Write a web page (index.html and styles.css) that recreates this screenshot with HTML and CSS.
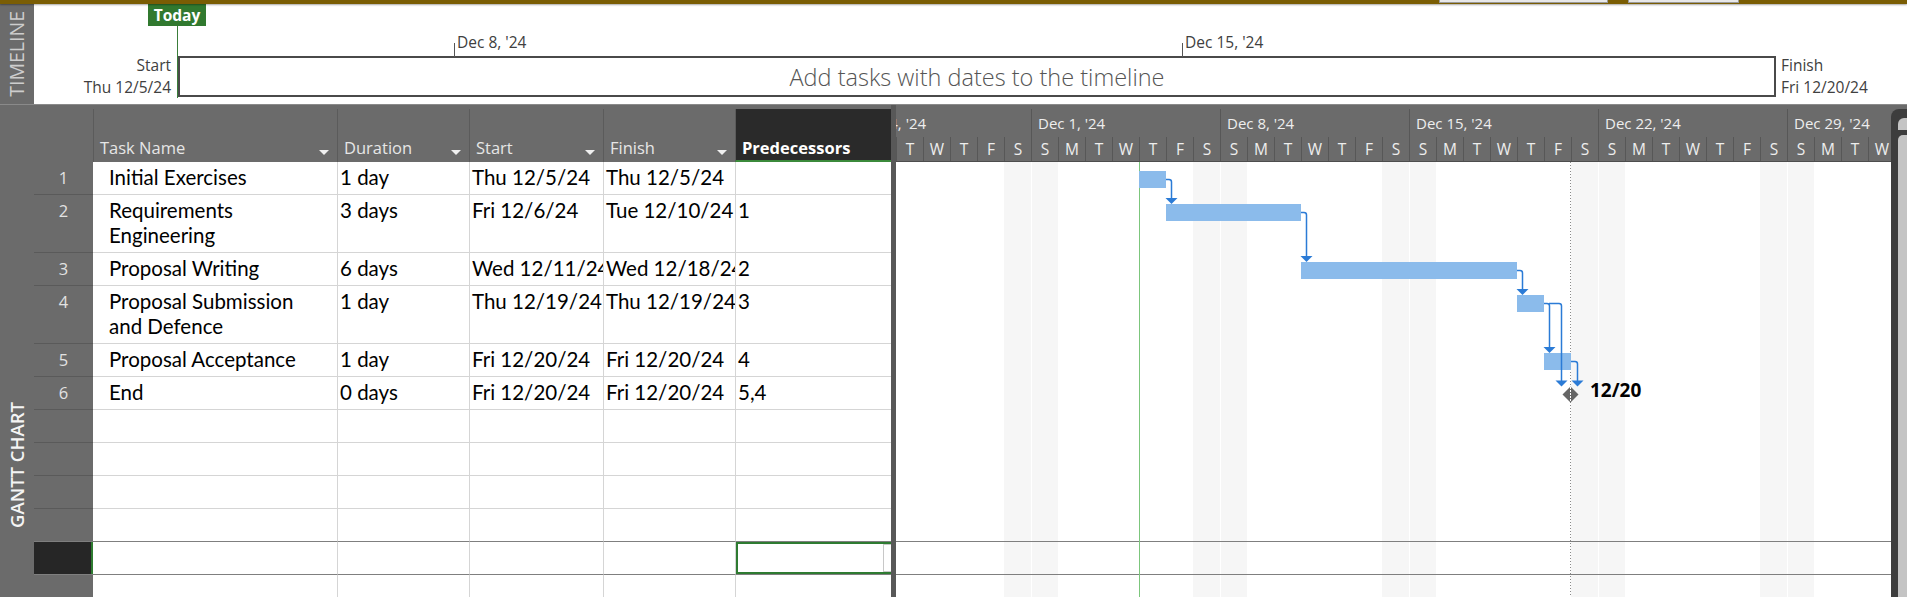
FILE: index.html
```html
<!DOCTYPE html>
<html>
<head>
<meta charset="utf-8">
<title>Gantt Chart</title>
<link rel="stylesheet" href="styles.css">
</head>
<body>
<div class="app">
  <div class="titlebar"><span class="tb-btn b1"></span><span class="tb-btn b2"></span></div>

  <section class="timeline">
    <div class="side"><span class="side-text">TIMELINE</span></div>
    <div class="tl-body">
      <div class="today-flag">Today</div>
      <div class="tick t1"><span>Dec 8, '24</span></div>
      <div class="tick t2"><span>Dec 15, '24</span></div>
      <div class="tl-row">
        <div class="tl-start">Start<br>Thu 12/5/24</div>
        <div class="tl-box">Add tasks with dates to the timeline</div>
        <div class="tl-finish">Finish<br>Fri 12/20/24</div>
      </div>
    </div>
  </section>

  <section class="gantt">
    <div class="side gside"><span class="side-text">GANTT CHART</span></div>

    <div class="grid">
      <div class="row hdr">
        <div class="hc first"></div>
        <div class="hc"><span>Task Name</span><i class="dd"></i></div>
        <div class="hc"><span>Duration</span><i class="dd"></i></div>
        <div class="hc"><span>Start</span><i class="dd"></i></div>
        <div class="hc"><span>Finish</span><i class="dd"></i></div>
        <div class="hc pred"><span>Predecessors</span></div>
      </div>
      <div class="row tr">
        <div class="c num">1</div><div class="c name">Initial Exercises</div><div class="c">1 day</div><div class="c">Thu 12/5/24</div><div class="c">Thu 12/5/24</div><div class="c"></div>
      </div>
      <div class="row tr h2">
        <div class="c num">2</div><div class="c name">Requirements Engineering</div><div class="c">3 days</div><div class="c">Fri 12/6/24</div><div class="c">Tue 12/10/24</div><div class="c">1</div>
      </div>
      <div class="row tr">
        <div class="c num">3</div><div class="c name">Proposal Writing</div><div class="c">6 days</div><div class="c">Wed 12/11/24</div><div class="c">Wed 12/18/24</div><div class="c">2</div>
      </div>
      <div class="row tr h2">
        <div class="c num">4</div><div class="c name">Proposal Submission and Defence</div><div class="c">1 day</div><div class="c">Thu 12/19/24</div><div class="c">Thu 12/19/24</div><div class="c">3</div>
      </div>
      <div class="row tr">
        <div class="c num">5</div><div class="c name">Proposal Acceptance</div><div class="c">1 day</div><div class="c">Fri 12/20/24</div><div class="c">Fri 12/20/24</div><div class="c">4</div>
      </div>
      <div class="row tr">
        <div class="c num">6</div><div class="c name">End</div><div class="c">0 days</div><div class="c">Fri 12/20/24</div><div class="c">Fri 12/20/24</div><div class="c">5,4</div>
      </div>
      <div class="row tr"><div class="c num"></div><div class="c name"></div><div class="c"></div><div class="c"></div><div class="c"></div><div class="c"></div></div>
      <div class="row tr"><div class="c num"></div><div class="c name"></div><div class="c"></div><div class="c"></div><div class="c"></div><div class="c"></div></div>
      <div class="row tr"><div class="c num"></div><div class="c name"></div><div class="c"></div><div class="c"></div><div class="c"></div><div class="c"></div></div>
      <div class="row tr pre"><div class="c num"></div><div class="c name"></div><div class="c"></div><div class="c"></div><div class="c"></div><div class="c"></div></div>
      <div class="row tr sel"><div class="c num"></div><div class="c name"></div><div class="c"></div><div class="c"></div><div class="c"></div><div class="c active"><span class="ddbtn"></span></div></div>
      <div class="row tr"><div class="c num"></div><div class="c name"></div><div class="c"></div><div class="c"></div><div class="c"></div><div class="c"></div></div>
    </div>

    <div class="splitter"></div>

    <div class="chart">
      <div class="scale">
        <div class="tier-top">
          <div class="wk">Nov 24, '24</div>
          <div class="wk">Dec 1, '24</div>
          <div class="wk">Dec 8, '24</div>
          <div class="wk">Dec 15, '24</div>
          <div class="wk">Dec 22, '24</div>
          <div class="wk">Dec 29, '24</div>
        </div>
        <div class="tier-bot">
          <div class="day">T</div><div class="day">W</div><div class="day">T</div><div class="day">F</div><div class="day">S</div>
          <div class="day">S</div><div class="day">M</div><div class="day">T</div><div class="day">W</div><div class="day">T</div><div class="day">F</div><div class="day">S</div>
          <div class="day">S</div><div class="day">M</div><div class="day">T</div><div class="day">W</div><div class="day">T</div><div class="day">F</div><div class="day">S</div>
          <div class="day">S</div><div class="day">M</div><div class="day">T</div><div class="day">W</div><div class="day">T</div><div class="day">F</div><div class="day">S</div>
          <div class="day">S</div><div class="day">M</div><div class="day">T</div><div class="day">W</div><div class="day">T</div><div class="day">F</div><div class="day">S</div>
          <div class="day">S</div><div class="day">M</div><div class="day">T</div><div class="day">W</div>
        </div>
      </div>
      <div class="cbody">
        <div class="crow"></div>
        <div class="crow h2"></div>
        <div class="crow"></div>
        <div class="crow h2"></div>
        <div class="crow"></div>
        <div class="crow"></div>
        <div class="crow"></div>
        <div class="crow"></div>
        <div class="crow"></div>
        <div class="crow pre"></div>
        <div class="crow sel"></div>
        <div class="crow"></div>
        <svg class="bars" width="995" height="435" viewBox="0 0 995 435">
          <line x1="243.5" y1="0" x2="243.5" y2="435" stroke="#7cc67c" stroke-width="1"/>
          <line x1="674.5" y1="0" x2="674.5" y2="435" stroke="#8a8a8a" stroke-width="1" stroke-dasharray="1 2"/>
          <g fill="#8bbbeb">
            <rect x="243" y="9" width="27" height="17"/>
            <rect x="270" y="42" width="135" height="17"/>
            <rect x="405" y="100" width="216" height="17"/>
            <rect x="621" y="133" width="27" height="17"/>
            <rect x="648" y="191" width="27" height="17"/>
          </g>
          <g fill="none" stroke="#2b7bd6" stroke-width="1.5">
            <path d="M270 17.5 H273 Q275.5 17.5 275.5 20 V37"/>
            <path d="M405 50.5 H408 Q410.5 50.5 410.5 53 V95"/>
            <path d="M621 108.5 H624 Q626.5 108.5 626.5 111 V128"/>
            <path d="M648 141.5 H651 Q653.5 141.5 653.5 144 V186"/>
            <path d="M653 141.5 H663 Q665.5 141.5 665.5 144 V219"/>
            <path d="M675 199.5 H679 Q681.5 199.5 681.5 202 V219"/>
          </g>
          <g fill="#2b7bd6">
            <polygon points="269.5,36 281.5,36 275.5,42"/>
            <polygon points="404.5,94 416.5,94 410.5,100"/>
            <polygon points="620.5,127 632.5,127 626.5,133"/>
            <polygon points="647.5,185 659.5,185 653.5,191"/>
            <polygon points="659.5,218.5 671.5,218.5 665.5,224.5"/>
            <polygon points="675.5,218.5 687.5,218.5 681.5,224.5"/>
          </g>
          <polygon points="674.5,224.5 682.5,232.5 674.5,240.5 666.5,232.5" fill="#666666"/>
          <line x1="674.5" y1="225" x2="674.5" y2="240" stroke="#ffffff" stroke-width="1" stroke-dasharray="2 1"/>
          <text class="ms-label" x="694" y="235">12/20</text>
        </svg>
      </div>
    </div>

    <div class="vscroll"><span class="sb-arrow"></span><span class="sb-thumb"></span></div>
  </section>
</div>
</body>
</html>
```
FILE: styles.css
```css
* { box-sizing: border-box; }
html, body { margin: 0; padding: 0; }
body {
  width: 1907px;
  height: 597px;
  overflow: hidden;
  background: #ffffff;
  font-family: "Open Sans", "Noto Sans", sans-serif;
}
.app { display: flex; flex-direction: column; height: 597px; }

/* title strip */
.titlebar {
  height: 4px;
  flex: none;
  display: flex;
  background: #7a5d04;
  box-shadow: 0 1px 2px rgba(0, 0, 0, 0.35);
  position: relative;
  z-index: 2;
}
.tb-btn { height: 3px; background: #e8e8e8; border: 1px solid #9a9a9a; border-top: 0; }
.tb-btn.b1 { margin-left: 1439px; width: 169px; }
.tb-btn.b2 { margin-left: 20px; width: 111px; }

/* side labels */
.side {
  width: 34px;
  flex: none;
  background: #6b6b6b;
  display: flex;
  align-items: center;
  justify-content: center;
}
.side-text {
  writing-mode: vertical-rl;
  transform: rotate(180deg);
  white-space: nowrap;
  line-height: 1;
  font-size: 19.5px;
  color: #cdcdcd;
}

/* timeline */
.timeline { display: flex; height: 100px; flex: none; }
.tl-body { flex: 1; position: relative; }
.today-flag {
  position: absolute;
  left: 114px;
  top: 0;
  width: 58px;
  height: 22px;
  background: #31792f;
  color: #ffffff;
  font-weight: 700;
  font-size: 15.5px;
  line-height: 22px;
  text-align: center;
}
.today-flag::after {
  content: "";
  position: absolute;
  left: 29px;
  top: 22px;
  width: 1px;
  height: 72px;
  background: #3a7d3a;
}
.tick { position: absolute; top: 39px; width: 1px; height: 14px; background: #555555; }
.tick span {
  position: absolute;
  left: 3px;
  top: -12px;
  font-size: 15.5px;
  line-height: 22px;
  color: #404040;
  white-space: nowrap;
}
.tick.t1 { left: 420px; }
.tick.t2 { left: 1148px; }
.tl-row { display: flex; align-items: flex-start; margin-top: 52px; }
.tl-start, .tl-finish {
  font-size: 15.5px;
  line-height: 22px;
  color: #404040;
  margin-top: -2px;
  white-space: nowrap;
}
.tl-start { width: 144px; text-align: right; padding-right: 7px; }
.tl-finish { padding-left: 5px; }
.tl-box {
  width: 1598px;
  height: 41px;
  border: 2px solid #4a4a4a;
  display: flex;
  align-items: center;
  justify-content: center;
  font-size: 23.5px;
  font-weight: 300;
  color: #555555;
}

/* gantt */
.gantt {
  display: flex;
  flex: 1;
  border-top: 1px solid #8a8a8a;
  background: #6b6b6b;
  overflow: hidden;
}
.gside { flex-direction: column; justify-content: flex-end; padding-bottom: 69px; }
.gside .side-text { color: #f4f4f4; font-weight: 600; font-size: 18.5px; }

.grid { width: 857px; flex: none; display: flex; flex-direction: column; background: #ffffff; overflow: hidden; }
.row { display: grid; grid-template-columns: 59px 244px 132px 134px 132px 156px; flex: none; }
.hdr { height: 57px; background: #6b6b6b; padding-top: 4px; }
.hc {
  display: flex;
  align-items: flex-end;
  justify-content: space-between;
  padding: 0 8px 3px 6px;
  border-left: 1px solid #5b5b5b;
  color: #e6e6e6;
  font-size: 16.5px;
  line-height: 22px;
  white-space: nowrap;
}
.hc.first { border-left: 0; }
.hc.pred {
  background: #2a2a2a;
  color: #ffffff;
  font-weight: 700;
  border-bottom: 2px solid #3b8a3b;
  padding-bottom: 1px;
}
.dd {
  width: 0;
  height: 0;
  border-left: 5px solid transparent;
  border-right: 5px solid transparent;
  border-top: 5px solid #f0f0f0;
  margin-bottom: 4px;
}

.tr { height: 33px; }
.tr.h2 { height: 58px; }
.c {
  border-left: 1px solid #d5d5d5;
  border-bottom: 1px solid #d5d5d5;
  padding: 3px 2px 0 2px;
  font-family: Lato, "Noto Sans", sans-serif;
  font-size: 20.5px;
  line-height: 25px;
  color: #000000;
  overflow: hidden;
  white-space: nowrap;
}
.c.num {
  background: #6b6b6b;
  border-left: 0;
  border-bottom-color: #5a5a5a;
  text-align: center;
  font-family: "Open Sans", "Noto Sans", sans-serif;
  font-size: 16.5px;
  color: #e2e2e2;
}
.c.name { border-left: 0; padding-left: 16px; padding-right: 30px; white-space: normal; }
.tr.pre .c, .tr.sel .c { border-bottom-color: #7f7f7f; }
.tr.sel .c.num { background: #262626; box-shadow: inset -2px 0 0 #2e7b31; }
.c.active {
  box-shadow: inset 0 0 0 2px #2e7b31;
  display: flex;
  justify-content: flex-end;
  align-items: center;
  padding: 0;
}
.ddbtn { width: 8px; height: 28px; background: #ffffff; border: 1px solid #c8c8c8; border-right: 0; }

.splitter { width: 5px; flex: none; background: #585858; }

/* chart */
.chart { width: 995px; flex: none; display: flex; flex-direction: column; overflow: hidden; background: #ffffff; }
.scale {
  height: 57px;
  flex: none;
  background: #6b6b6b;
  padding-top: 4px;
  border-bottom: 1px solid #4d4d4d;
  overflow: hidden;
  color: #eeeeee;
  font-size: 15px;
}
.tier-top { display: flex; height: 28px; margin-left: -54px; }
.wk { flex: none; width: 189px; border-left: 1px solid #575757; padding-left: 6px; line-height: 28px; white-space: nowrap; }
.tier-bot { display: flex; height: 24px; }
.day { flex: none; width: 27px; border-left: 1px solid #575757; text-align: center; line-height: 24px; font-size: 15.5px; }
.cbody {
  position: relative;
  flex: 1;
  background: repeating-linear-gradient(to right,
    #ffffff 0, #ffffff 108px,
    #f6f6f6 108px, #f6f6f6 135px,
    #ffffff 135px, #ffffff 136px,
    #f6f6f6 136px, #f6f6f6 162px,
    #ffffff 162px, #ffffff 189px);
}
.crow { height: 33px; }
.crow.h2 { height: 58px; }
.crow.pre, .crow.sel { border-bottom: 1px solid #7f7f7f; }
.bars { position: absolute; left: 0; top: 0; }
.ms-label { font-family: "Open Sans", "Noto Sans", sans-serif; font-weight: 700; font-size: 19px; fill: #000000; }

/* scrollbar */
.vscroll {
  width: 16px;
  flex: none;
  margin-top: 4px;
  background: #3d3d3d;
  border-top-left-radius: 8px;
  display: flex;
  flex-direction: column;
  padding: 9px 0 0 7px;
}
.sb-arrow { height: 12px; background: #c4c4c4; border-top-left-radius: 6px; }
.sb-thumb { flex: 1; margin-top: 5px; background: #c4c4c4; border-top-left-radius: 5px; }
```
